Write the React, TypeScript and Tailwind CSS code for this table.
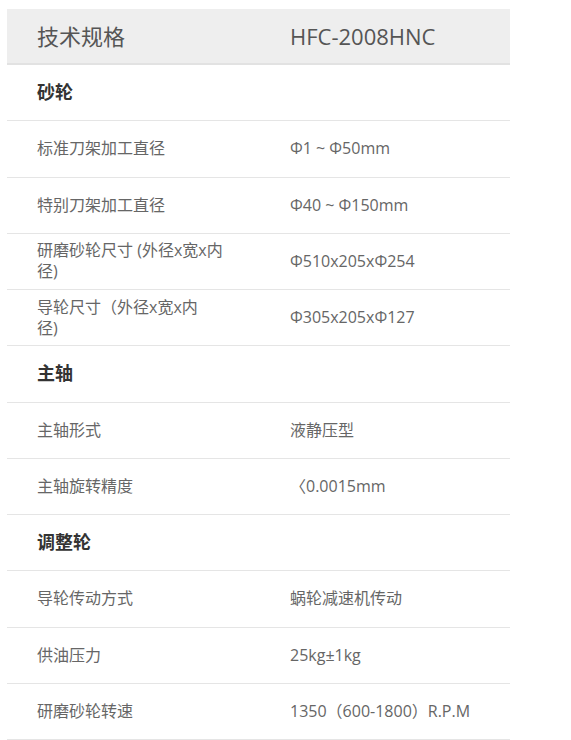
import React from 'react';

type Row =
  | { kind: 'section'; title: string }
  | { kind: 'item'; label: string[]; value: string };

const rows: Row[] = [
  { kind: 'section', title: '砂轮' },
  { kind: 'item', label: ['标准刀架加工直径'], value: 'Φ1 ~ Φ50mm' },
  { kind: 'item', label: ['特别刀架加工直径'], value: 'Φ40 ~ Φ150mm' },
  { kind: 'item', label: ['研磨砂轮尺寸 (外径x宽x内', '径)'], value: 'Φ510x205xΦ254' },
  { kind: 'item', label: ['导轮尺寸（外径x宽x内', '径)'], value: 'Φ305x205xΦ127' },
  { kind: 'section', title: '主轴' },
  { kind: 'item', label: ['主轴形式'], value: '液静压型' },
  { kind: 'item', label: ['主轴旋转精度'], value: '〈0.0015mm' },
  { kind: 'section', title: '调整轮' },
  { kind: 'item', label: ['导轮传动方式'], value: '蜗轮减速机传动' },
  { kind: 'item', label: ['供油压力'], value: '25kg±1kg' },
  { kind: 'item', label: ['研磨砂轮转速'], value: '1350（600-1800）R.P.M' },
];

const font = { fontFamily: '"Open Sans", "Noto Sans CJK SC", sans-serif' };

export default function App() {
  return (
    <div className="min-h-screen bg-white pt-[9px] pl-[7px]" style={font}>
      <div className="w-[503px]">
        {/* Header */}
        <div className="grid grid-cols-[253px_1fr] h-[56px] bg-[#eeeeee] border-b-2 border-[#e2e2e2] items-center text-[22px] text-[#555]">
          <div className="pl-[30px]">技术规格</div>
          <div className="pl-[30px]">HFC-2008HNC</div>
        </div>

        {rows.map((row, i) =>
          row.kind === 'section' ? (
            <div
              key={i}
              className="h-[56.25px] flex items-center border-b border-[#e5e5e5] pl-[30px] text-[18px] font-bold text-[#333]"
            >
              {row.title}
            </div>
          ) : (
            <div
              key={i}
              className="grid grid-cols-[253px_1fr] h-[56.25px] items-center border-b border-[#e5e5e5] text-[16px] text-[#666] leading-[21px]"
            >
              <div className="pl-[30px]">
                {row.label.map((l, j) => (
                  <div key={j}>{l}</div>
                ))}
              </div>
              <div className="pl-[30px]">{row.value}</div>
            </div>
          )
        )}
      </div>
    </div>
  );
}
